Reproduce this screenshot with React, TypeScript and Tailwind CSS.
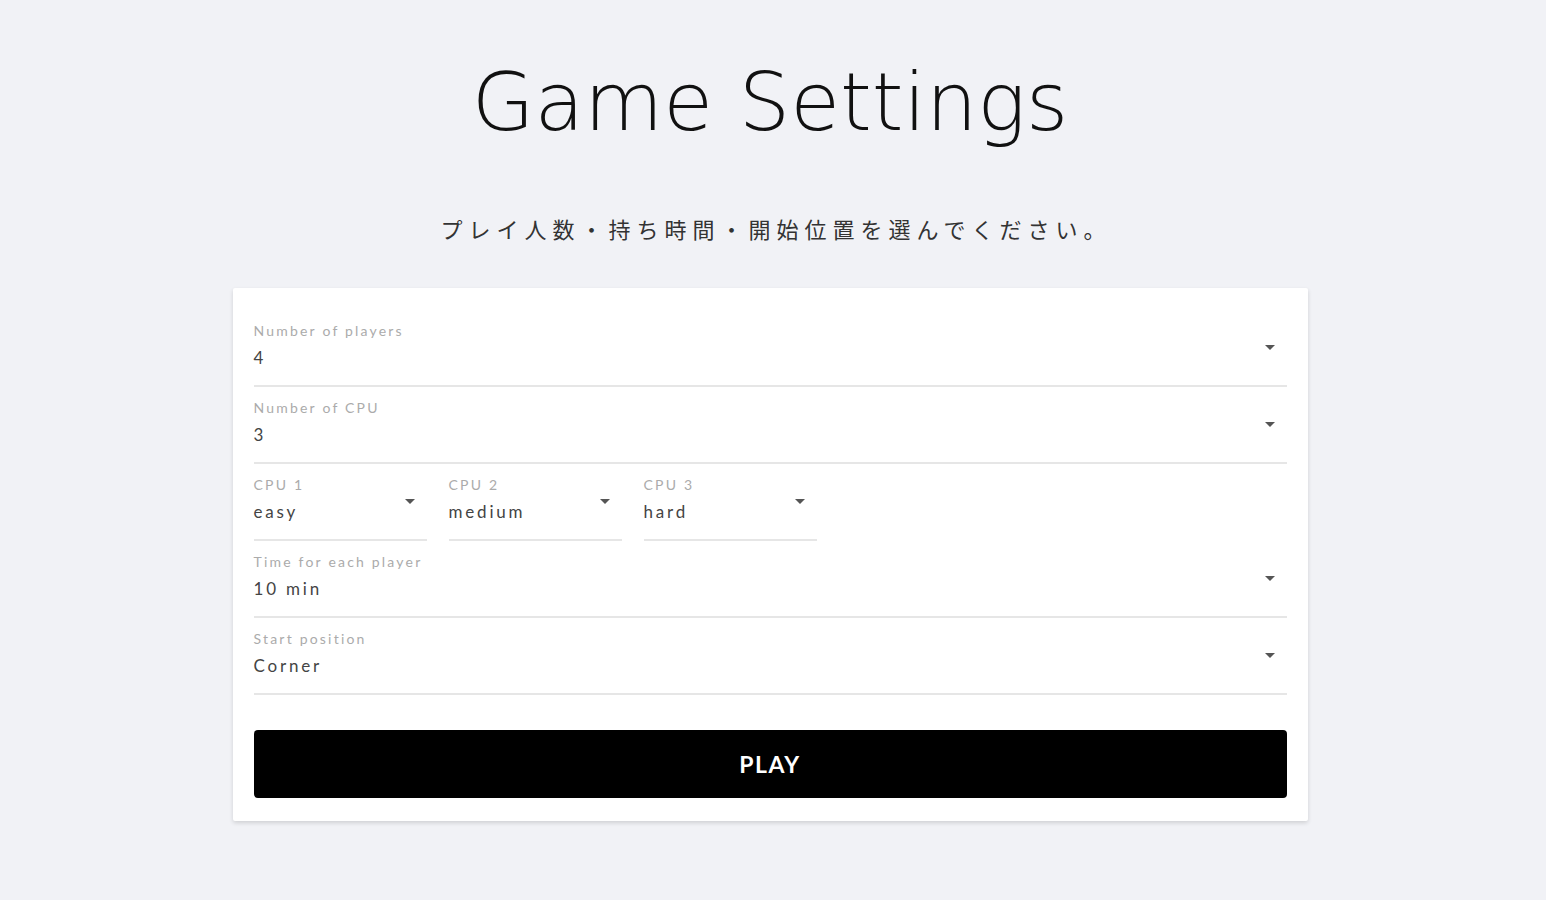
type Field = { label: string; value: string }

function DropIcon() {
  return (
    <svg width="24" height="24" viewBox="0 0 24 24" className="absolute right-[5px] top-[12px] fill-[#555]">
      <path d="M7 10l5 5 5-5z" />
    </svg>
  )
}

function SelectField({ label, value, className = '' }: Field & { className?: string }) {
  return (
    <div className={`relative flex flex-col border-b-2 border-[#e6e6e6] pb-[15px] ${className}`}>
      <span className="text-[14px] leading-[16px] tracking-[2.2px] text-[#ababab]">{label}</span>
      <span className="mt-[7px] text-[17px] leading-[24px] tracking-[2.8px] text-[#444]">{value}</span>
      <DropIcon />
    </div>
  )
}

const cpus: Field[] = [
  { label: 'CPU 1', value: 'easy' },
  { label: 'CPU 2', value: 'medium' },
  { label: 'CPU 3', value: 'hard' },
]

export default function App() {
  return (
    <div className="min-h-screen bg-[#f1f2f6] flex flex-col items-center font-['Lato',sans-serif]">
      <h1 className="mt-[47px] mr-[6px] text-[81px] leading-[110px] font-extralight text-[#111] font-['DejaVu_Sans',sans-serif]">
        Game Settings
      </h1>
      <p className="mt-[55px] pl-[6px] text-[22px] leading-[32px] tracking-[6px] text-[#333] font-['Noto_Sans_CJK_JP',sans-serif]">
        プレイ人数・持ち時間・開始位置を選んでください。
      </p>
      <div className="mt-[44px] mr-[6px] w-[1075px] bg-white rounded-[2px] shadow-[0_2px_4px_rgba(0,0,0,0.14)] px-[21px] pt-[35px] pb-[23px]">
        <div className="flex flex-col gap-[13px]">
          <SelectField label="Number of players" value="4" />
          <SelectField label="Number of CPU" value="3" />
          <div className="flex gap-[22px]">
            {cpus.map((c) => (
              <SelectField key={c.label} {...c} className="w-[173px]" />
            ))}
          </div>
          <SelectField label="Time for each player" value="10 min" />
          <SelectField label="Start position" value="Corner" />
        </div>
        <button className="mt-[35px] w-full h-[68px] rounded-[4px] bg-black text-white text-[23px] font-bold tracking-[1.5px]">
          PLAY
        </button>
      </div>
    </div>
  )
}
